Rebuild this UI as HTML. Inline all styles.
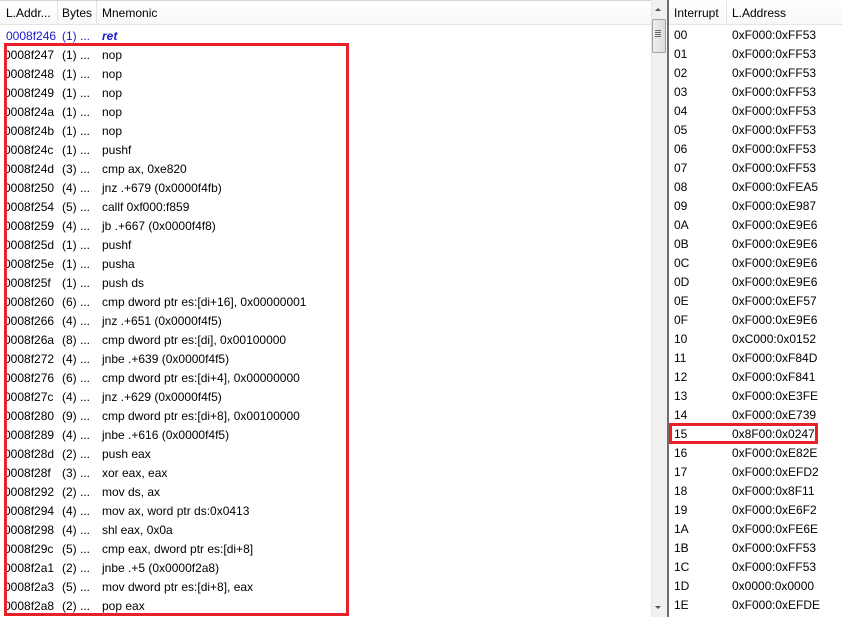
<!DOCTYPE html><html><head><style>
body{margin:0;width:842px;height:617px;background:#fff;position:relative;overflow:hidden;font-family:"Liberation Sans",sans-serif;font-size:12px;color:#000}
.a{position:absolute;white-space:nowrap;line-height:19px}
.h{position:absolute;top:0;height:24px;background:linear-gradient(#fff,#f7f8fa);border-bottom:1px solid #e5e5e5}
.s{position:absolute;top:1px;width:1px;height:23px;background:#e3e3e3}
</style></head><body>
<div class="h" style="left:0;width:651px;border-top:1px solid #d5d5d5;top:0;height:23px"></div>
<div class="h" style="left:669px;width:173px"></div>
<div class="s" style="left:57px"></div><div class="s" style="left:96px"></div><div class="s" style="left:726px"></div>
<div class="a" style="left:6px;top:4px">L.Addr...</div>
<div class="a" style="left:62px;top:4px">Bytes</div>
<div class="a" style="left:102px;top:4px">Mnemonic</div>
<div class="a" style="left:674px;top:4px">Interrupt</div>
<div class="a" style="left:732px;top:4px">L.Address</div>
<div style="position:absolute;left:651px;top:0;width:16px;height:617px;background:#f0f0f0;border-left:1px solid #e4e4e4"></div>
<div style="position:absolute;left:652px;top:19px;width:12px;height:32px;border:1px solid #a0a0a0;border-radius:2px;background:linear-gradient(90deg,#eee,#dcdcdc)"></div>
<div style="position:absolute;left:655px;top:32px;width:6px;height:1px;background:#666;box-shadow:0 2px #666,0 4px #666,0 -2px #666"></div>
<div style="position:absolute;left:655px;top:8px;border:3px solid transparent;border-bottom:3px solid #555;border-top:0"></div>
<div style="position:absolute;left:655px;top:606px;border:3px solid transparent;border-top:3px solid #555;border-bottom:0"></div>
<div style="position:absolute;left:667px;top:0;width:2px;height:617px;background:#6d6d6d"></div>
<div id="L"></div><div id="R"></div>
<div style="position:absolute;left:4px;top:43px;width:339px;height:567px;border:3px solid #e8202a"></div>
<div style="position:absolute;left:669px;top:423px;width:143px;height:15px;border:3px solid #e8202a"></div>
<script>
var L=[["0008f246","(1) ...","ret"],["0008f247","(1) ...","nop"],["0008f248","(1) ...","nop"],["0008f249","(1) ...","nop"],["0008f24a","(1) ...","nop"],["0008f24b","(1) ...","nop"],["0008f24c","(1) ...","pushf"],["0008f24d","(3) ...","cmp ax, 0xe820"],["0008f250","(4) ...","jnz .+679 (0x0000f4fb)"],["0008f254","(5) ...","callf 0xf000:f859"],["0008f259","(4) ...","jb .+667 (0x0000f4f8)"],["0008f25d","(1) ...","pushf"],["0008f25e","(1) ...","pusha"],["0008f25f","(1) ...","push ds"],["0008f260","(6) ...","cmp dword ptr es:[di+16], 0x00000001"],["0008f266","(4) ...","jnz .+651 (0x0000f4f5)"],["0008f26a","(8) ...","cmp dword ptr es:[di], 0x00100000"],["0008f272","(4) ...","jnbe .+639 (0x0000f4f5)"],["0008f276","(6) ...","cmp dword ptr es:[di+4], 0x00000000"],["0008f27c","(4) ...","jnz .+629 (0x0000f4f5)"],["0008f280","(9) ...","cmp dword ptr es:[di+8], 0x00100000"],["0008f289","(4) ...","jnbe .+616 (0x0000f4f5)"],["0008f28d","(2) ...","push eax"],["0008f28f","(3) ...","xor eax, eax"],["0008f292","(2) ...","mov ds, ax"],["0008f294","(4) ...","mov ax, word ptr ds:0x0413"],["0008f298","(4) ...","shl eax, 0x0a"],["0008f29c","(5) ...","cmp eax, dword ptr es:[di+8]"],["0008f2a1","(2) ...","jnbe .+5 (0x0000f2a8)"],["0008f2a3","(5) ...","mov dword ptr es:[di+8], eax"],["0008f2a8","(2) ...","pop eax"]];
var R="F000:0xFF53,F000:0xFF53,F000:0xFF53,F000:0xFF53,F000:0xFF53,F000:0xFF53,F000:0xFF53,F000:0xFF53,F000:0xFEA5,F000:0xE987,F000:0xE9E6,F000:0xE9E6,F000:0xE9E6,F000:0xE9E6,F000:0xEF57,F000:0xE9E6,C000:0x0152,F000:0xF84D,F000:0xF841,F000:0xE3FE,F000:0xE739,8F00:0x0247,F000:0xE82E,F000:0xEFD2,F000:0x8F11,F000:0xE6F2,F000:0xFE6E,F000:0xFF53,F000:0xFF53,0000:0x0000,F000:0xEFDE".split(",");
var h="";L.forEach(function(r,i){var t=27+19*i;var c=i==0?"color:#1a1acc;":"";h+='<div class="a" style="left:'+(i?4:6)+'px;top:'+t+'px;'+c+'">'+r[0]+'</div><div class="a" style="left:62px;top:'+t+'px;'+c+'">'+r[1]+'</div><div class="a" style="left:102px;top:'+t+'px;'+c+(i==0?'font-weight:bold;font-style:italic;':'')+'">'+r[2]+'</div>';});
R.forEach(function(r,i){var t=26+19*i;h+='<div class="a" style="left:674px;top:'+t+'px">'+(i<16?"0":"1")+(i%16).toString(16).toUpperCase()+'</div><div class="a" style="left:732px;top:'+t+'px">0x'+r+'</div>';});
document.getElementById("L").innerHTML=h;
</script>
</body></html>
